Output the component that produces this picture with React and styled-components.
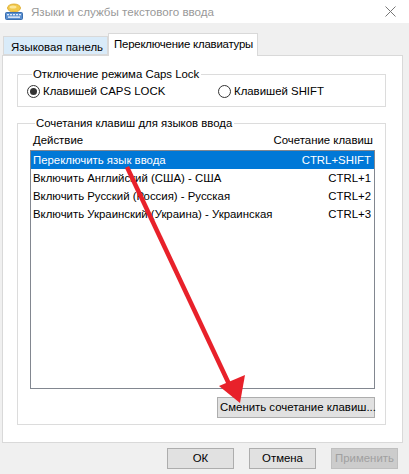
import React from 'react';
import styled, { createGlobalStyle } from 'styled-components';

const GlobalStyle = createGlobalStyle`
  body {
    margin: 0;
    background: #f0f0f0;
    font-family: 'Liberation Sans', Arial, sans-serif;
    font-size: 11.4px;
    color: #000;
  }
`;

const Window = styled.div`
  position: relative;
  width: 409px;
  height: 474px;
  background: #f0f0f0;
  display: flex;
  flex-direction: column;
  overflow: hidden;
`;

const TitleBar = styled.div`
  height: 23px;
  background: #fff;
  display: flex;
  align-items: center;
  padding: 0 0 0 5px;
  color: #999;
  font-size: 11.6px;
`;

const TitleText = styled.span`
  margin-left: 8px;
  flex: 1;
  padding-bottom: 1px;
`;

const CloseBox = styled.div`
  width: 30px;
  height: 23px;
  display: flex;
  align-items: center;
  justify-content: center;
  margin-right: 4px;
`;

const TabStrip = styled.div`
  display: flex;
  align-items: flex-end;
  padding-left: 3px;
  margin-top: 10px;
  height: 22px;
  position: relative;
  z-index: 1;
`;

const Tab = styled.div`
  box-sizing: border-box;
  height: ${(p) => (p.active ? '23px' : '19px')};
  padding: ${(p) => (p.active ? '3px 4px 0 5px' : '3px 4px 0 7px')};
  margin-bottom: ${(p) => (p.active ? '-1px' : '0')};
  background: ${(p) => (p.active ? '#fff' : '#d9ebf9')};
  border: 1px solid #d9d9d9;
  border-bottom: ${(p) => (p.active ? 'none' : '1px solid #d9d9d9')};
  white-space: nowrap;
  line-height: 15px;
  letter-spacing: ${(p) => (p.active ? '-0.2px' : '0')};
`;

const Panel = styled.div`
  box-sizing: border-box;
  margin: 0 6px 0 2px;
  height: 388px;
  background: #fff;
  border: 1px solid #d9d9d9;
  padding: 0 16px 0 14px;
  display: flex;
  flex-direction: column;
`;

const Group = styled.fieldset`
  margin: ${(p) => p.$top}px 0 0 0;
  padding: ${(p) => p.$pad};
  border: 1px solid #dcdcdc;
  min-width: 0;
`;

const Legend = styled.legend`
  padding: 0 2px 0 1px;
  margin-left: 5px;
  line-height: 15px;
`;

const RadioRow = styled.div`
  display: flex;
  align-items: center;
  height: 16px;
`;

const RadioLabel = styled.label`
  display: flex;
  align-items: center;
  width: ${(p) => p.width}px;
  gap: 3px;
  white-space: nowrap;
`;

const RadioCircle = styled.span`
  box-sizing: border-box;
  width: 13px;
  height: 13px;
  border-radius: 50%;
  border: 1px solid #333;
  background: #fff;
  display: flex;
  align-items: center;
  justify-content: center;
  &::after {
    content: '';
    width: 7px;
    height: 7px;
    border-radius: 50%;
    background: ${(p) => (p.checked ? '#333' : 'transparent')};
  }
`;

const ListHeader = styled.div`
  display: flex;
  justify-content: space-between;
  height: 16px;
  line-height: 16px;
  padding: 1px 2px 0 3px;
  margin-bottom: 2px;
`;

const ListBox = styled.div`
  box-sizing: border-box;
  height: 239px;
  border: 1px solid #828790;
  background: #fff;
`;

const ListRow = styled.div`
  display: flex;
  justify-content: space-between;
  height: 18px;
  line-height: 18px;
  padding: 0 3px 0 2px;
  white-space: nowrap;
  background: ${(p) => (p.selected ? '#0078d7' : 'transparent')};
  color: ${(p) => (p.selected ? '#fff' : '#000')};
`;

const ButtonRow = styled.div`
  display: flex;
  justify-content: flex-end;
  gap: ${(p) => p.gap || 0}px;
  margin-top: ${(p) => p.top}px;
  padding-right: ${(p) => p.right || 0}px;
`;

const Button = styled.button`
  box-sizing: border-box;
  height: 21px;
  width: ${(p) => (p.width ? `${p.width}px` : 'auto')};
  padding: 0 2px;
  font-family: inherit;
  font-size: 11.4px;
  white-space: nowrap;
  background: ${(p) => (p.disabled ? '#cccccc' : '#e1e1e1')};
  border: 1px solid ${(p) => (p.disabled ? '#bfbfbf' : '#adadad')};
  color: ${(p) => (p.disabled ? '#a0a0a0' : '#000')};
  line-height: 19px;
`;

const Overlay = styled.svg`
  position: absolute;
  left: 0;
  top: 0;
  pointer-events: none;
`;

const rows = [
  { action: 'Переключить язык ввода', keys: 'CTRL+SHIFT', selected: true },
  { action: 'Включить Английский (США) - США', keys: 'CTRL+1' },
  { action: 'Включить Русский (Россия) - Русская', keys: 'CTRL+2' },
  { action: 'Включить Украинский (Украина) - Украинская', keys: 'CTRL+3' }
];

function KeyboardIcon() {
  return (
    <svg width="18" height="17" viewBox="0 0 18 17">
      <ellipse cx="9" cy="5" rx="6.5" ry="4" fill="#f2c94c" stroke="#d9a520" strokeWidth="0.8" />
      <ellipse cx="8" cy="4" rx="3.5" ry="1.6" fill="#fbe79a" />
      <path d="M6 8.5 L5 10.5 L8 9" fill="#f2c94c" />
      <rect x="0.5" y="9.5" width="17" height="7" rx="1" fill="#5a8fd0" stroke="#3a6fb0" />
      <g fill="#dfeaf8">
        <rect x="2" y="11" width="2" height="1.3" />
        <rect x="5" y="11" width="2" height="1.3" />
        <rect x="8" y="11" width="2" height="1.3" />
        <rect x="11" y="11" width="2" height="1.3" />
        <rect x="14" y="11" width="2" height="1.3" />
        <rect x="3" y="13.4" width="12" height="1.5" />
      </g>
    </svg>
  );
}

function CloseIcon() {
  return (
    <svg width="11" height="11" viewBox="0 0 11 11">
      <path d="M0.5 0.5 L10.5 10.5 M10.5 0.5 L0.5 10.5" stroke="#777" strokeWidth="1" />
    </svg>
  );
}

export default function App() {
  return (
    <Window>
      <GlobalStyle />
      <TitleBar>
        <KeyboardIcon />
        <TitleText>Языки и службы текстового ввода</TitleText>
        <CloseBox>
          <CloseIcon />
        </CloseBox>
      </TitleBar>

      <TabStrip>
        <Tab>Языковая панель</Tab>
        <Tab active>Переключение клавиатуры</Tab>
      </TabStrip>

      <Panel>
        <Group $top={11} $pad="1px 8px 7px 9px">
          <Legend>Отключение режима Caps Lock</Legend>
          <RadioRow>
            <RadioLabel width={191}>
              <RadioCircle checked />
              Клавишей CAPS LOCK
            </RadioLabel>
            <RadioLabel width={150}>
              <RadioCircle />
              Клавишей SHIFT
            </RadioLabel>
          </RadioRow>
        </Group>

        <Group $top={9} $pad="0 10px 6px 12px">
          <Legend>Сочетания клавиш для языков ввода</Legend>
          <ListHeader>
            <span>Действие</span>
            <span>Сочетание клавиш</span>
          </ListHeader>
          <ListBox>
            {rows.map((r) => (
              <ListRow key={r.action} selected={r.selected}>
                <span>{r.action}</span>
                <span>{r.keys}</span>
              </ListRow>
            ))}
          </ListBox>
          <ButtonRow top={8}>
            <Button width={158}>Сменить сочетание клавиш...</Button>
          </ButtonRow>
        </Group>
      </Panel>

      <ButtonRow top={5} gap={15} right={11}>
        <Button width={67}>ОК</Button>
        <Button width={67}>Отмена</Button>
        <Button width={67} disabled>Применить</Button>
      </ButtonRow>

      <Overlay width="409" height="474" viewBox="0 0 409 474">
        <line x1="127" y1="167" x2="229" y2="384" stroke="#e8212a" strokeWidth="4.5" />
        <polygon points="240,403 219,386 245,375" fill="#e8212a" />
      </Overlay>
    </Window>
  );
}
